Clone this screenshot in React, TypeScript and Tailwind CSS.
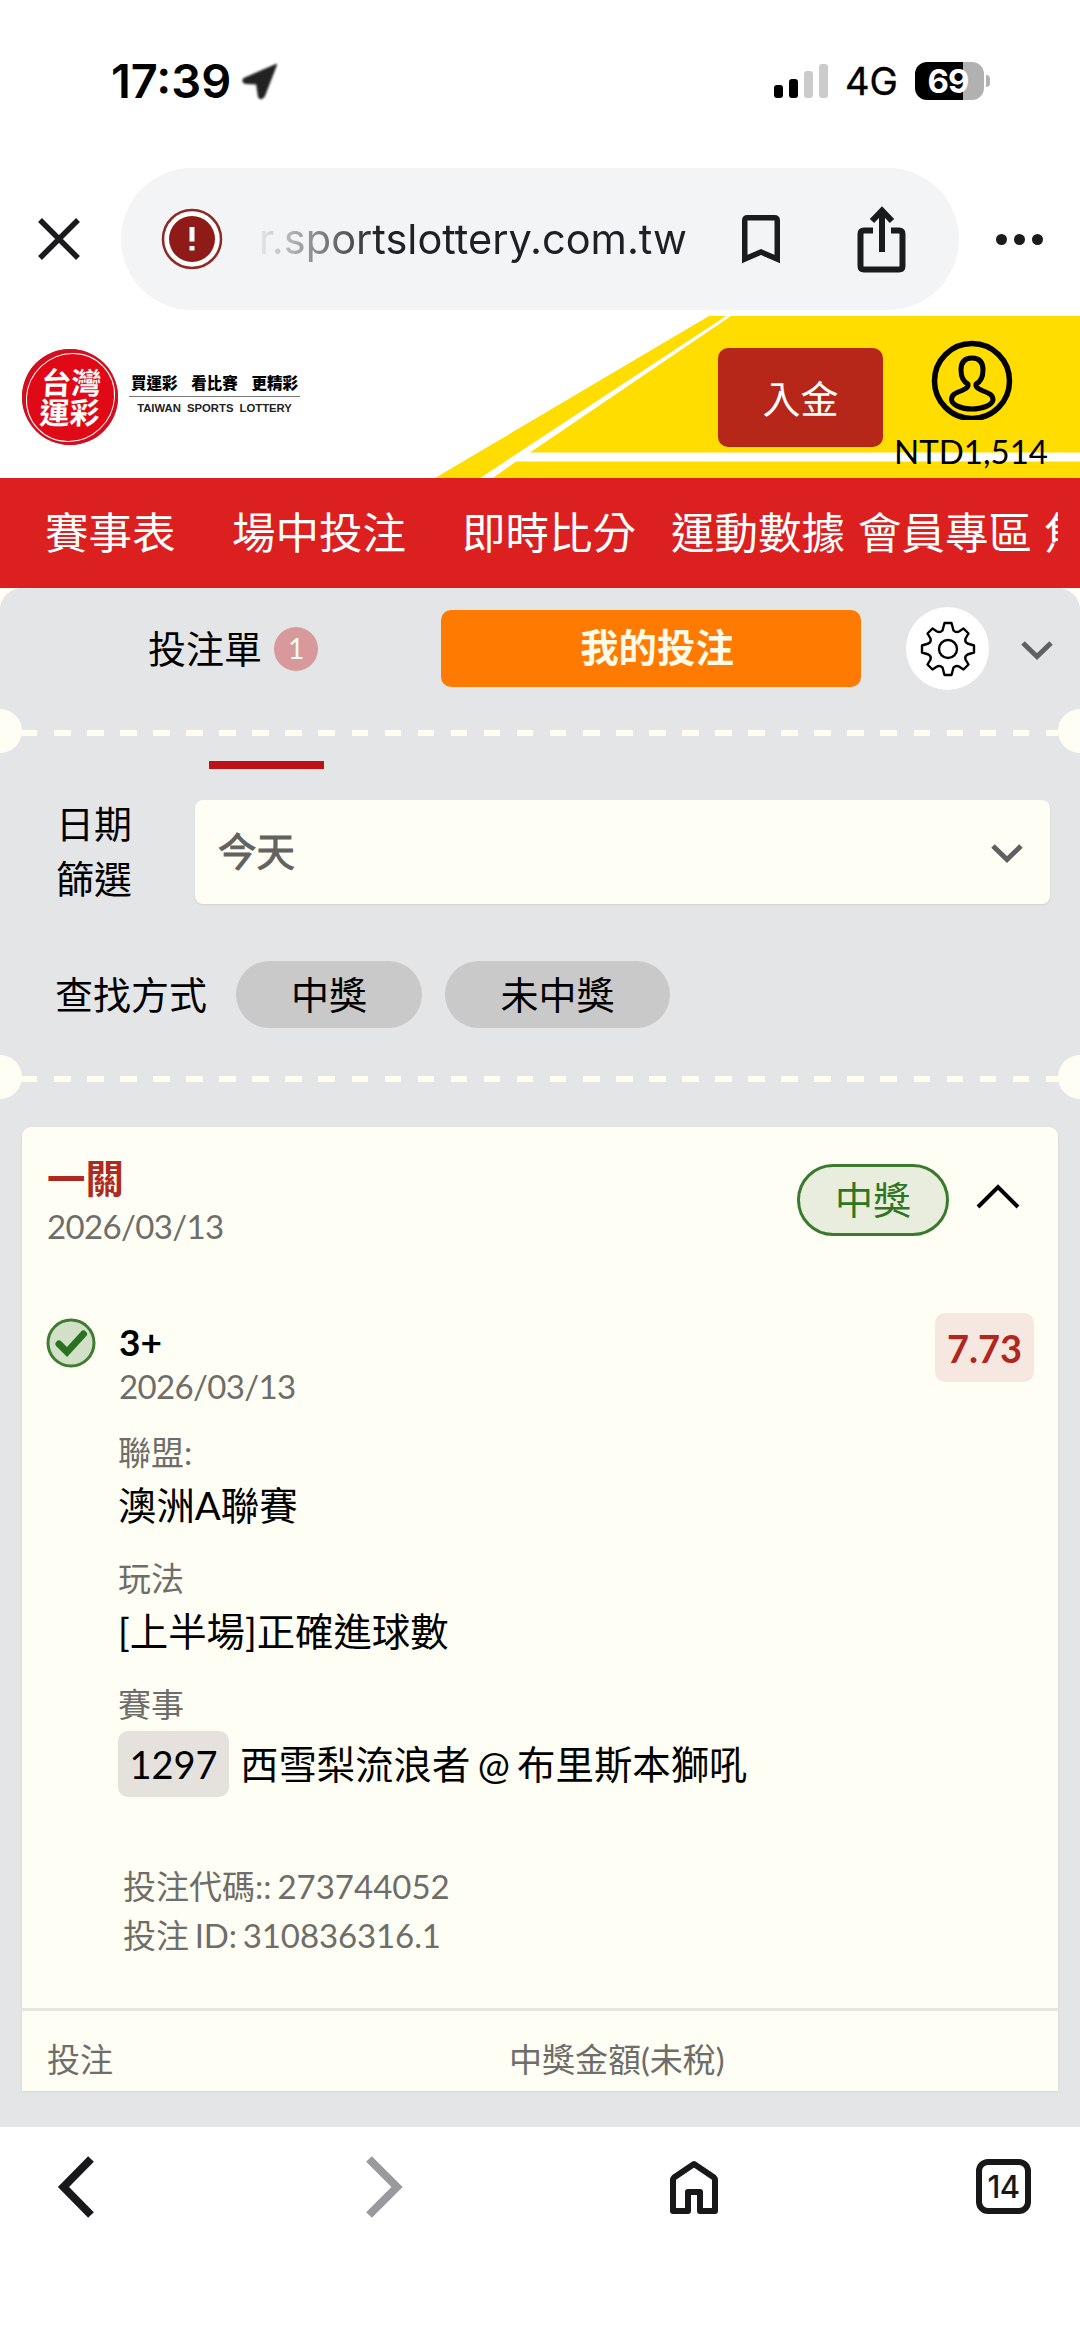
import React from 'react';

const navItems = [
  { label: '賽事表', width: 'w-[187px]' },
  { label: '場中投注', width: 'w-[230px]' },
  { label: '即時比分', width: 'w-[209px]' },
  { label: '運動數據', width: 'w-[187px]' },
  { label: '會員專區', width: 'w-[186px]' },
  { label: '焦', width: 'w-[44px]' },
];

const details = [
  { label: '聯盟:', value: '澳洲A聯賽' },
  { label: '玩法', value: '[上半場]正確進球數' },
];

function StatusBar() {
  return (
    <div className="h-[168px] flex items-start justify-between pl-[111px] pr-[90px] pt-[56px] font-['Inter',sans-serif] text-black">
      <div className="flex items-center h-[50px]">
        <span className="w-[129px] text-[47px] leading-[50px] font-semibold">17:39</span>
        <svg className="w-[40px] h-[40px] -mt-[2px] blur-[1px]" viewBox="0 0 40 40">
          <path d="M36 5 L4 19 Q2 22 6 23 L17 23.500 L19 37 Q21 40 24 36 Z" fill="#222" stroke="#222" strokeWidth="2" strokeLinejoin="round" />
        </svg>
      </div>
      <div className="flex items-center h-[50px]">
        <div className="flex items-end gap-[5.500px] h-[34px]">
          <div className="w-[9.500px] h-[13px] rounded-[3px] bg-black" />
          <div className="w-[9.500px] h-[19px] rounded-[3px] bg-black" />
          <div className="w-[9.500px] h-[27px] rounded-[3px] bg-[#cbcbcb]" />
          <div className="w-[9.500px] h-[34px] rounded-[3px] bg-[#cbcbcb]" />
        </div>
        <span className="ml-[17px] w-[70px] text-[38px] leading-[50px] font-normal [-webkit-text-stroke:0.4px_#000]">4G</span>
        <div className="flex items-center gap-[2px]">
          <div className="w-[69px] h-[38px] rounded-[12px] bg-[linear-gradient(90deg,#000_48px,#b1b1b1_48px)] flex items-center justify-center text-white text-[33px] leading-[38px] font-bold tracking-[-1px] pr-[3px]">
            69
          </div>
          <div className="w-[4px] h-[12px] rounded-r-full bg-[#b1b1b1]" />
        </div>
      </div>
    </div>
  );
}

function AddressBar() {
  return (
    <div className="h-[142px] flex items-center">
      <svg className="w-[44px] h-[44px] ml-[37px]" viewBox="0 0 44 44" fill="none" stroke="#1a1b1d" strokeWidth="5.500">
        <path d="M3 3 L41 41 M41 3 L3 41" />
      </svg>
      <div className="ml-[40px] w-[838px] h-[142px] rounded-full bg-[#f3f4f6] flex items-center">
        <svg className="w-[62px] h-[62px] ml-[40px]" viewBox="0 0 62 62">
          <circle cx="31" cy="31" r="29" fill="#fff" stroke="#8c2a26" strokeWidth="2.500" />
          <circle cx="31" cy="31" r="23" fill="#8e1b17" />
          <path d="M31 19 V33.500 M31 38 V42.500" stroke="#fff" strokeWidth="5" />
        </svg>
        <div className="ml-[28px] w-[436px] flex justify-end overflow-hidden bg-[linear-gradient(90deg,#f3f4f6_0px,#1f2023_130px)] bg-clip-text text-transparent font-['Inter',sans-serif] text-[41.500px] leading-[60px] whitespace-nowrap">
          r.sportslottery.com.tw
        </div>
        <svg className="ml-[52px] w-[44px] h-[52px]" viewBox="0 0 44 52" fill="none" stroke="#1a1b1d" strokeWidth="5.500">
          <path d="M5.750 46 V7.500 Q5.750 4.750 8.500 4.750 H35.500 Q38.250 4.750 38.250 7.500 V46 L22 39 Z" />
        </svg>
        <svg className="ml-[71px] -mt-[2px] w-[56px] h-[70px]" viewBox="0 0 56 70" fill="none" stroke="#1a1b1d" strokeWidth="6">
          <path d="M19 27.500 H10 Q6.500 27.500 6.500 31 V63 Q6.500 66.500 10 66.500 H45 Q48.500 66.500 48.500 63 V31 Q48.500 27.500 45 27.500 H37" />
          <path d="M28 49 V8" />
          <path d="M18 18 L28 7.500 L38 18" />
        </svg>
      </div>
      <div className="ml-[37px] flex gap-[7px]">
        <div className="w-[11px] h-[11px] rounded-full bg-[#1a1b1d]" />
        <div className="w-[11px] h-[11px] rounded-full bg-[#1a1b1d]" />
        <div className="w-[11px] h-[11px] rounded-full bg-[#1a1b1d]" />
      </div>
    </div>
  );
}

function SiteHeader() {
  return (
    <header className="relative h-[168px] bg-white">
      {/* Franja amarilla de fondo */}
      <svg className="absolute inset-0 w-full h-full" viewBox="0 0 1080 168">
        <path d="M709 6 H1080 V168 H435 Z" fill="#ffdd00" />
        <path d="M726 6 H731 L530 142.500 H1080 V151.500 H516 L493 168 H480 Z" fill="#fff" />
      </svg>

      <div className="relative flex h-full">
        <div className="mt-[39px] ml-[22px] w-[96px] h-[96px] rounded-full bg-[#e00a17] p-[3.500px] shadow-[inset_0_0_0_3px_#cf1020]">
          <div className="w-full h-full rounded-full border-[1.500px] border-white flex flex-col items-center justify-center text-white text-[30px] leading-[29.500px] font-bold -skew-x-3">
            <span>台灣</span>
            <span>運彩</span>
          </div>
        </div>
        <div className="ml-[11px] mt-[62px] w-[171px] text-center text-[#222]">
          <div className="flex justify-between px-[2px] pb-[2px] text-[15.500px] leading-[22px] font-black text-black border-b border-[#777]">
            <span>買運彩</span>
            <span>看比賽</span>
            <span>更精彩</span>
          </div>
          <div className="mt-[4px] font-['Liberation_Sans',sans-serif] text-[11.300px] leading-[15px] font-bold whitespace-nowrap [word-spacing:3px]">
            TAIWAN SPORTS LOTTERY
          </div>
        </div>

        <button className="ml-auto mt-[38px] w-[165px] h-[99px] rounded-[10px] bg-[#b62619] text-white text-[38px] leading-[98px]">入金</button>
        <div className="w-[150px] ml-[13px] mr-[34px] flex flex-col items-center">
          <svg className="mt-[29px] ml-[2px] w-[84px] h-[81px]" viewBox="0 0 84 81" fill="none" stroke="#000">
            <circle cx="42" cy="42" r="37.500" strokeWidth="5.500" />
            <path
              d="M38 45 C39 49 35 50 32 51.500 C24 54.500 21.500 56 21.500 61 C22.500 66 31 70 42 70 C53 70 62 66 63 61 C63 56 60 54.500 52 51.500 C49 50 45 49 46 45 C50 43 53 38 53 31 C53 23 49 19 42 19 C35 19 31 23 31 31 C31 38 34 43 38 45 Z"
              strokeWidth="5"
              strokeLinejoin="round"
            />
          </svg>
          <div className="mt-[10px] text-[33px] leading-[43px] text-black whitespace-nowrap">NTD1,514</div>
        </div>
      </div>
    </header>
  );
}

function Perforation() {
  return (
    <div className="flex items-center h-[44px] overflow-hidden">
      <div className="w-[22px] h-[44px] rounded-r-full bg-[#fffef5]" />
      <div className="flex-1 mt-[4px] h-[6px] bg-[repeating-linear-gradient(90deg,#fffef0_0px,#fffef0_15.500px,transparent_15.500px,transparent_32px,#fffef0_32px,#fffef0_33.060px)]" />
      <div className="w-[22px] h-[44px] rounded-l-full bg-[#fffef5]" />
    </div>
  );
}

function GearIcon() {
  return (
    <svg className="w-[56px] h-[56px]" viewBox="0 0 56 56" fill="none" stroke="#000" strokeWidth="2.400" strokeLinejoin="round">
      <path d="M24.500 2 H31.500 L33.500 9.500 Q36 12 39 10.500 L43.500 7.500 L48.500 12.500 L45.500 17.500 Q44.500 21 47.500 22.500 L54 24.500 V31.500 L47.500 33.500 Q44.500 35 45.500 38.500 L48.500 43.500 L43.500 48.500 L39 45.500 Q36 44 33.500 46.500 L31.500 54 H24.500 L22.500 46.500 Q20 44 17 45.500 L12.500 48.500 L7.500 43.500 L10.500 38.500 Q11.500 35 8.500 33.500 L2 31.500 V24.500 L8.500 22.500 Q11.500 21 10.500 17.500 L7.500 12.500 L12.500 7.500 L17 10.500 Q20 12 22.500 9.500 Z" />
      <circle cx="28" cy="28" r="9" />
    </svg>
  );
}

function ChevronDown() {
  return (
    <svg className="w-[34px] h-[22px]" viewBox="0 0 34 22" fill="none" stroke="#5f6062" strokeWidth="5">
      <path d="M3 4 L17 17.500 L31 4" />
    </svg>
  );
}

function BetCard() {
  return (
    <div className="mx-[22px] mt-[28px] h-[964px] rounded-t-[9px] bg-[#fffef5] pt-[27px] shadow-[0_1px_3px_rgba(0,0,0,0.06)]">
      <div className="flex px-[25px]">
        <div>
          <div className="text-[38.400px] leading-[48px] font-bold text-[#ad2a20]">一關</div>
          <div className="text-[33px] leading-[48px] tracking-[-0.650px] text-[#6e6d69]">2026/03/13</div>
        </div>
        <div className="ml-auto mt-[10px] w-[152px] h-[72px] rounded-full border-[3px] border-[#397a2c] bg-[#e9eddd] text-center text-[38px] leading-[65px] text-[#2f7623]">
          中獎
        </div>
        <svg className="ml-[27px] mr-[13px] mt-[28px] w-[44px] h-[28px]" viewBox="0 0 44 28" fill="none" stroke="#000" strokeWidth="4">
          <path d="M2 25 L22 5 L42 25" />
        </svg>
      </div>

      <div className="mt-[63px] flex px-[24px]">
        <svg className="mt-[5px] w-[50px] h-[50px]" viewBox="0 0 50 50">
          <circle cx="25" cy="25" r="23" fill="#d2e0c8" stroke="#3f7c31" strokeWidth="3" />
          <path d="M13 26 L21 34 L37.500 16" fill="none" stroke="#2b7220" strokeWidth="7" strokeLinecap="round" />
        </svg>
        <div className="ml-[23px] pt-[6px]">
          <div className="text-[37px] leading-[46px] font-bold text-black">3+</div>
          <div className="-mt-px text-[33px] leading-[44px] tracking-[-0.650px] text-[#6e6d69]">2026/03/13</div>
        </div>
        <div className="ml-auto w-[99px] h-[69px] rounded-[10px] bg-[#f6e7e0] text-center text-[38px] leading-[70px] font-bold text-[#b0281d]">7.73</div>
      </div>

      <div className="pl-[96px] text-black">
        <div className="h-[2px]" />
        {details.map((d) => (
          <div key={d.label} className="mt-[20px]">
            <div className="text-[33px] leading-[44px] text-[#6e6d69]">{d.label}</div>
            <div className="text-[38.400px] leading-[62px]">{d.value}</div>
          </div>
        ))}
        <div className="mt-[20px] text-[33px] leading-[44px] text-[#6e6d69]">賽事</div>
        <div className="mt-[5px] flex items-center text-[38px] leading-[66px]">
          <span className="w-[111px] h-[66px] rounded-[10px] bg-[#e5e2dd] text-center">1297</span>
          <span className="ml-[11px] whitespace-nowrap text-[38.400px] [word-spacing:-2.500px]">西雪梨流浪者 @ 布里斯本獅吼</span>
        </div>
        <div className="mt-[65px] pl-[5px] text-[33px] leading-[49px] text-[#6e6d69] [word-spacing:-2.500px]">
          <div>投注代碼:: 273744052</div>
          <div className="tracking-[-0.100px]">投注 ID: 310836316.1</div>
        </div>
      </div>

      <div className="mt-[48px] border-t-[3px] border-[#e6e5de] pt-[18px] px-[25px] grid grid-cols-[462px_1fr] text-[33px] leading-[60px] text-[#6e6d69]">
        <span>投注</span>
        <span>中獎金額(未稅)</span>
      </div>
    </div>
  );
}

function BottomToolbar() {
  return (
    <div className="h-[214px] bg-white flex items-start pt-[28px] pl-[55px]">
      <svg className="w-[40px] h-[64px]" viewBox="0 0 40 64" fill="none" stroke="#17181a" strokeWidth="8">
        <path d="M36 4 L8.500 32 L36 60" />
      </svg>
      <svg className="ml-[270px] w-[40px] h-[64px]" viewBox="0 0 40 64" fill="none" stroke="#999a9e" strokeWidth="8">
        <path d="M4 4 L32 32 L4 60" />
      </svg>
      <svg className="ml-[262px] mt-[4px] w-[54px] h-[58px]" viewBox="0 0 54 58" fill="none" stroke="#17181a" strokeWidth="6" strokeLinejoin="round">
        <path d="M6 21 Q6 19.500 7 18.500 L27 5 L47 18.500 Q48 19.500 48 21 V52 H33 V33 H21 V52 H6 Z" />
      </svg>
      <div className="ml-[255px] mt-[4px] w-[55px] h-[55px] rounded-[12px] border-[6px] border-[#17181a] text-center font-['Inter',sans-serif] text-[31px] leading-[43px] font-medium text-[#17181a] tracking-[-0.500px]">
        14
      </div>
    </div>
  );
}

export default function App() {
  return (
    <div lang="zh-Hant" className="w-[1080px] h-[2341px] overflow-hidden bg-white font-['Lato','Noto_Sans_CJK_TC',sans-serif]">
      <StatusBar />
      <AddressBar />
      <SiteHeader />

      <nav className="h-[110px] bg-[#dc1f1f] pl-[45px] pr-[22px]">
        <div className="flex overflow-hidden text-white text-[43.500px] leading-[109px] whitespace-nowrap">
          {navItems.map((item) => (
            <div key={item.label} className={`shrink-0 ${item.width}`}>{item.label}</div>
          ))}
        </div>
      </nav>

      <main className="bg-[#fffef5]">
        <div className="h-[1539px] rounded-t-[22px] bg-[#e4e5e7] text-black">
          <div className="h-[121px] flex items-center">
            <div className="w-[441px] pl-[148px] flex items-center text-[38px] leading-[60px]">
              <span className="-mt-[2px]">投注單</span>
              <span className="ml-[12px] w-[44px] h-[44px] rounded-full bg-[#d7999b] text-center text-[28px] leading-[43px] text-[#fffef5]">1</span>
            </div>
            <div className="w-[420px] h-[77px] pl-[12px] rounded-[10px] bg-[#ff7a00] text-center text-[38.400px] leading-[75px] font-bold text-[#fffbe8]">我的投注</div>
            <div className="ml-[45px] w-[83px] h-[83px] rounded-full bg-white flex items-center justify-center">
              <GearIcon />
            </div>
            <div className="ml-[31px] mt-[2px]">
              <ChevronDown />
            </div>
          </div>

          <Perforation />

          <div className="mt-[8px] ml-[209px] w-[115px] h-[8px] bg-[#be1116]" />

          <div className="mt-[31px] flex h-[104px]">
            <div className="w-[195px] pl-[56px] -mt-[4px] text-[38px] leading-[55px]">
              日期
              <br />
              篩選
            </div>
            <div className="w-[855px] h-[104px] rounded-[8px] bg-[#fffef5] shadow-[0_1px_2px_rgba(120,110,60,0.18)] flex items-center justify-between pl-[23px] pr-[26px] text-[38.400px] leading-[60px] text-[#62625f]">
              <span className="-mt-[2px] [-webkit-text-stroke:1px_#62625f]">今天</span>
              <div className="mt-[2px]">
                <ChevronDown />
              </div>
            </div>
          </div>

          <div className="mt-[57px] mb-[27px] flex text-[38px] leading-[66px]">
            <span className="w-[181px] ml-[55px]">查找方式</span>
            <span className="w-[186px] h-[67px] rounded-full bg-[#c9c9c9] text-center">中獎</span>
            <span className="ml-[23px] w-[225px] h-[67px] rounded-full bg-[#c9c9c9] text-center">未中獎</span>
          </div>

          <Perforation />

          <BetCard />
        </div>
      </main>

      <BottomToolbar />
    </div>
  );
}
